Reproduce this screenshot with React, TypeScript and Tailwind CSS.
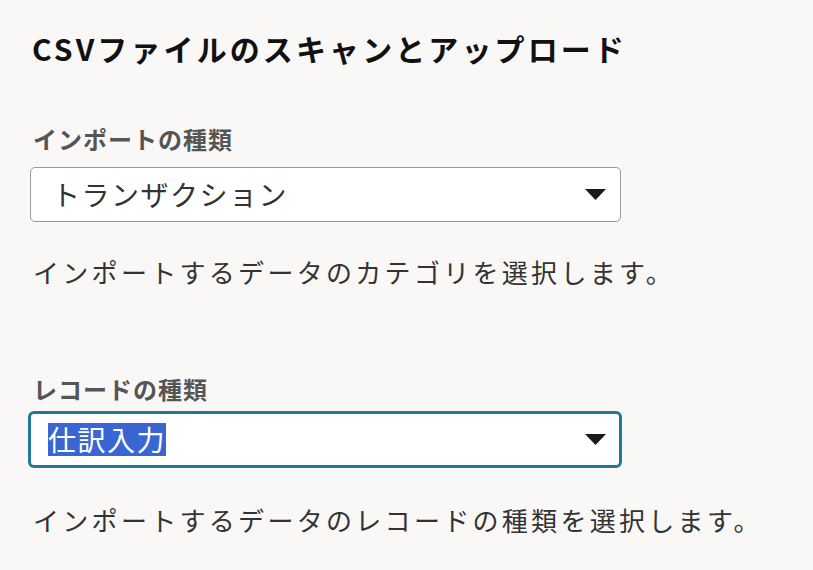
import React from "react";

const jp = { fontFamily: '"Noto Sans CJK JP", "Noto Sans", sans-serif' };

function Arrow() {
  return (
    <svg width="21" height="11" viewBox="0 0 21 11" className="shrink-0">
      <polygon points="0,0 21,0 10.5,11" fill="#1a1a1a" />
    </svg>
  );
}

export default function App() {
  return (
    <div
      className="w-[813px] h-[570px] bg-[#f9f8f6] overflow-hidden pt-[30px] pl-[30px]"
      style={jp}
    >
      <h1 className="h-[36px] leading-[36px] text-[30px] font-bold text-[#111] pl-[2px] tracking-[3.1px]">
        CSVファイルのスキャンとアップロード
      </h1>

      <div className="mt-[58px] h-[30px] leading-[30px] text-[24px] font-bold text-[#555] pl-[3px] tracking-[1px]">
        インポートの種類
      </div>
      <div className="mt-[13px] w-[591px] h-[55px] rounded-[5px] border-[1.5px] border-[#999] bg-white flex items-center pl-[21px] pr-[14px]">
        <span className="flex-1 text-[28px] leading-[33px] text-[#333] tracking-[1.5px]">
          トランザクション
        </span>
        <Arrow />
      </div>
      <div className="mt-[35px] h-[30px] leading-[30px] text-[26px] text-[#333] pl-[3px] tracking-[3.3px]">
        インポートするデータのカテゴリを選択します。
      </div>

      <div className="mt-[87px] h-[30px] leading-[30px] text-[24px] font-bold text-[#555] pl-[3px] tracking-[1px]">
        レコードの種類
      </div>
      <div className="mt-[7px] -ml-[2px] w-[594px] h-[57px] rounded-[6px] border-[3px] border-[#1f7a99] bg-white flex items-center pl-[17px] pr-[13px]">
        <span className="flex-1">
          <span className="inline-block bg-[#3a66d4] text-white text-[28px] leading-[33px] tracking-[1.5px]">
            仕訳入力
          </span>
        </span>
        <Arrow />
      </div>
      <div className="mt-[37px] h-[30px] leading-[30px] text-[26px] text-[#333] pl-[3px] tracking-[3.3px]">
        インポートするデータのレコードの種類を選択します。
      </div>
    </div>
  );
}
